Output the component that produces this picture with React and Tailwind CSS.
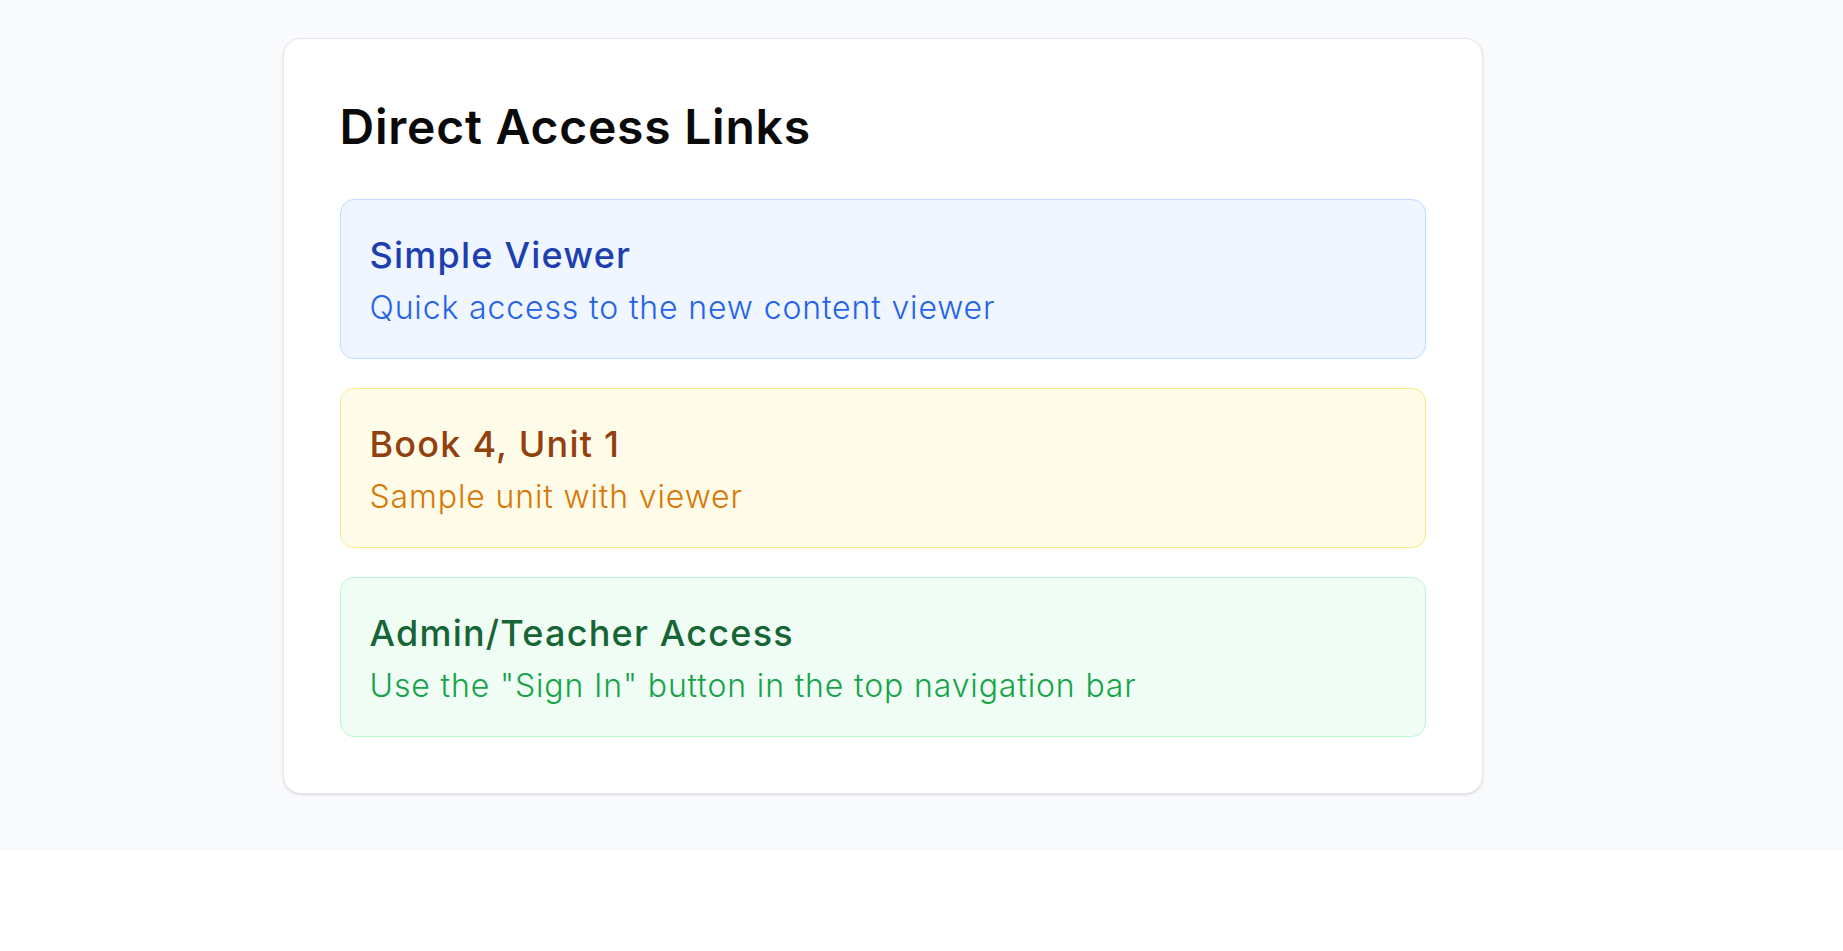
import React from 'react'

const links = [
  {
    title: 'Simple Viewer',
    desc: 'Quick access to the new content viewer',
    box: 'bg-[#eff6ff] border-[#bfdbfe]',
    head: 'text-[#1e40af]',
    sub: 'text-[#2563eb]',
  },
  {
    title: 'Book 4, Unit 1',
    desc: 'Sample unit with viewer',
    box: 'bg-[#fefce8] border-[#fde68a]',
    head: 'text-[#92400e]',
    sub: 'text-[#d97706]',
  },
  {
    title: 'Admin/Teacher Access',
    desc: 'Use the "Sign In" button in the top navigation bar',
    box: 'bg-[#f0fdf4] border-[#bbf7d0]',
    head: 'text-[#166534]',
    sub: 'text-[#16a34a]',
  },
]

const App = () => {
  return (
    <div className="font-['Inter',sans-serif]">
      <div className="bg-[#f9fafb] pt-[38px] pb-[57px]">
        <div className="max-w-7xl mx-auto pl-px">
          <div className="w-[1200px] bg-white border border-[#e5e7eb] rounded-[18px] shadow-sm p-14">
            <h1 className="text-[48px] leading-[64px] font-semibold text-[#0a0a0a] tracking-[0.016em] mb-10">
              Direct Access Links
            </h1>
            <div className="flex flex-col gap-[29px]">
              {links.map((l) => (
                <a key={l.title} href="#" className={`block border rounded-[14px] p-[29px] ${l.box}`}>
                  <h2 className={`text-[36px] leading-[52px] font-medium tracking-[0.034em] mb-1.5 ${l.head}`}>{l.title}</h2>
                  <p className={`text-[32px] leading-[42px] font-light tracking-[0.027em] ${l.sub}`}>{l.desc}</p>
                </a>
              ))}
            </div>
          </div>
        </div>
      </div>
    </div>
  )
}

export default App
